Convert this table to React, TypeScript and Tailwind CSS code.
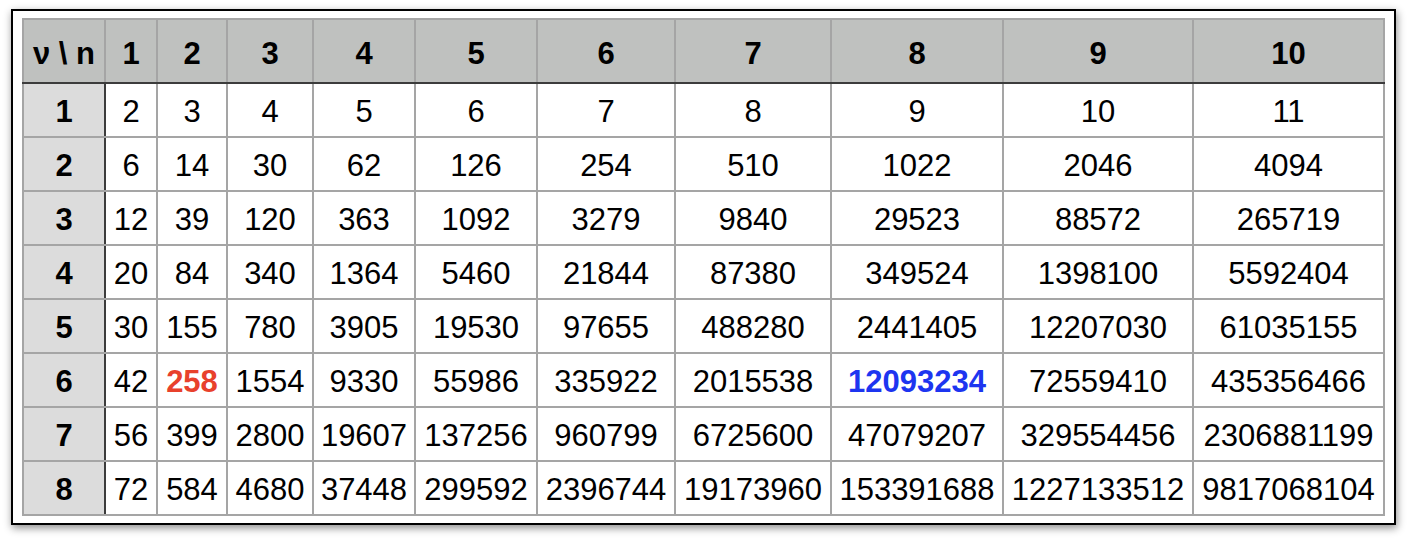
const rows = [1, 2, 3, 4, 5, 6, 7, 8];
const cols = [1, 2, 3, 4, 5, 6, 7, 8, 9, 10];

// sum of nu^k for k = 1..n+1
function value(nu: number, n: number) {
  let sum = 0;
  let p = 1;
  for (let k = 1; k <= n + 1; k++) {
    p *= nu;
    sum += p;
  }
  return sum;
}

function cellColor(nu: number, n: number) {
  if (nu === 6 && n === 2) return 'font-bold text-[#e8412c]';
  if (nu === 6 && n === 8) return 'font-bold text-[#1d35f0]';
  return 'text-black';
}

export default function App() {
  return (
    <div className="h-[542px] w-[1408px] bg-white pl-[11px] pt-[9px] font-['Liberation_Sans',Arial,sans-serif]">
      <div className="h-[516px] w-[1385px] border-2 border-black bg-white pl-[9px] pt-[7px] shadow-[1px_3px_8px_rgba(0,0,0,0.45)]">
        <table className="w-[1361px] table-fixed border-collapse border-2 border-[#a5a5a5] text-[31px] leading-none">
          <colgroup>
            <col className="w-[82px]" />
            <col className="w-[52px]" />
            <col className="w-[70px]" />
            <col className="w-[86px]" />
            <col className="w-[102px]" />
            <col className="w-[122px]" />
            <col className="w-[138px]" />
            <col className="w-[156px]" />
            <col className="w-[172px]" />
            <col className="w-[190px]" />
            <col className="w-[191px]" />
          </colgroup>
          <thead>
            <tr className="h-[64px] bg-[#bfc1bf]">
              <th className="border-2 border-[#a5a5a5] border-b-[#3c3c3c] px-0 pt-[4px] font-bold">ν \ n</th>
              {cols.map((n) => (
                <th key={n} className="border-2 border-[#a5a5a5] border-b-[#3c3c3c] px-0 pt-[4px] font-bold">
                  {n}
                </th>
              ))}
            </tr>
          </thead>
          <tbody>
            {rows.map((nu) => (
              <tr key={nu} className="h-[54px]">
                <td className="border-2 border-[#a5a5a5] border-r-[#3c3c3c] bg-[#dcdcdc] px-0 pt-[3px] text-center font-bold">{nu}</td>
                {cols.map((n) => (
                  <td key={n} className={`border-2 border-[#a5a5a5] px-0 pt-[3px] text-center ${cellColor(nu, n)}`}>
                    {value(nu, n)}
                  </td>
                ))}
              </tr>
            ))}
          </tbody>
        </table>
      </div>
    </div>
  );
}
